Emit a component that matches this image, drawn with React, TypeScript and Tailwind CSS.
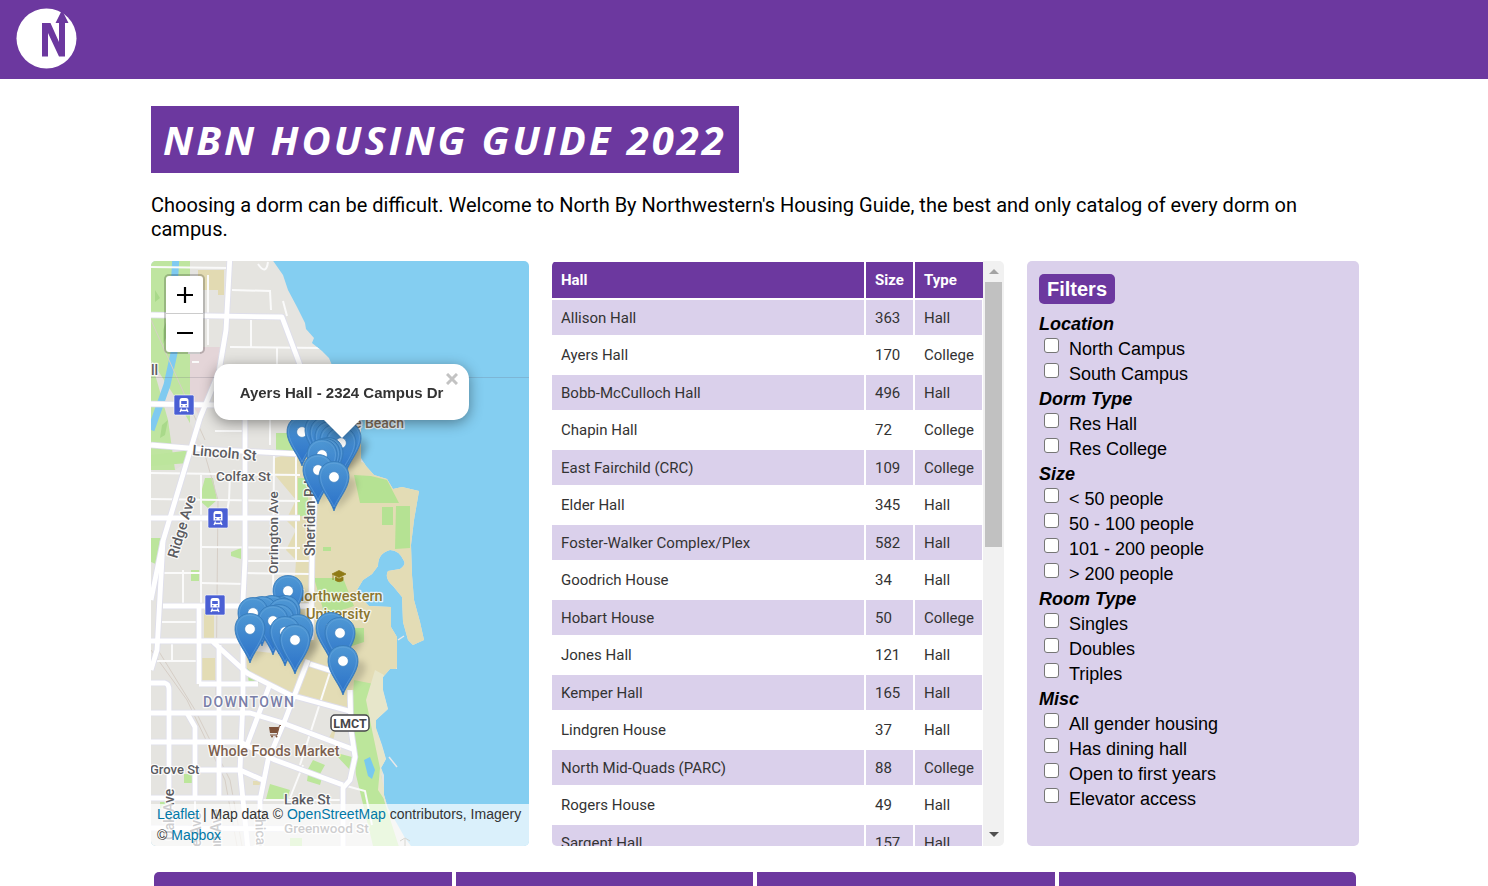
import React from "react";

const halls: [string, number, string][] = [
  ["Allison Hall", 363, "Hall"],
  ["Ayers Hall", 170, "College"],
  ["Bobb-McCulloch Hall", 496, "Hall"],
  ["Chapin Hall", 72, "College"],
  ["East Fairchild (CRC)", 109, "College"],
  ["Elder Hall", 345, "Hall"],
  ["Foster-Walker Complex/Plex", 582, "Hall"],
  ["Goodrich House", 34, "Hall"],
  ["Hobart House", 50, "College"],
  ["Jones Hall", 121, "Hall"],
  ["Kemper Hall", 165, "Hall"],
  ["Lindgren House", 37, "Hall"],
  ["North Mid-Quads (PARC)", 88, "College"],
  ["Rogers House", 49, "Hall"],
  ["Sargent Hall", 157, "Hall"],
];

const filters: { title: string; options: string[] }[] = [
  { title: "Location", options: ["North Campus", "South Campus"] },
  { title: "Dorm Type", options: ["Res Hall", "Res College"] },
  {
    title: "Size",
    options: ["< 50 people", "50 - 100 people", "101 - 200 people", "> 200 people"],
  },
  { title: "Room Type", options: ["Singles", "Doubles", "Triples"] },
  {
    title: "Misc",
    options: ["All gender housing", "Has dining hall", "Open to first years", "Elevator access"],
  },
];

const pins: [number, number][] = [
  [302, 432], [320, 430], [325, 433], [330, 437], [335, 440], [346, 438], [341, 443],
  [328, 453], [325, 454], [322, 455], [318, 470], [334, 477],
  [288, 591], [285, 611], [279, 612], [272, 611], [262, 612], [253, 613], [283, 614],
  [279, 620], [273, 621], [250, 629], [298, 630], [285, 632], [295, 640],
  [331, 628], [340, 633], [343, 661],
];

const majorRoads = [
  "M230 255 L226 330 L219 372 L200 418 L163 541 L151 600",
  "M151 315 L282 317 L300 365 L318 420 L312 560 L311 640",
  "M151 404 L215 405",
  "M245 400 L245 560 L243 600 L243 700 L240 770 L248 850",
  "M151 518 L300 518",
  "M151 445 L200 449 L300 454",
  "M163 606 L310 606",
  "M163 541 L157 650 L151 670",
  "M151 641 H240 M212 641 L247 673 L290 695 L349 711",
  "M199 606 L199 684 M219 645 L219 798",
  "M151 683 H165 Q169 684 169 690 V798",
  "M199 684 H258",
  "M151 713 L250 713 L280 722 L355 750",
  "M187 713 L195 727 V798",
  "M151 742 L240 742 L275 760 L343 785",
  "M200 770 H240 L265 781",
  "M151 798 H262",
  "M308 660 L285 720 L268 760 L260 800 V850",
  "M270 684 L247 745",
  "M310 664 L335 672",
  "M350 690 L351 730 L355 757 L350 780 L343 788 V850",
  "M151 828 L350 829",
];

const minorRoads = [
  "M151 267 L230 268 M258 264 Q266 276 268 262",
  "M232 290 L270 291 L271 310",
  "M208 275 L208 345 M251 320 L251 347 M230 347 L322 348 L327 352",
  "M277 348 L277 365 M283 301 L287 316",
  "M188 353 L200 353 M192 362 L199 362",
  "M215 431 L245 431 M270 405 L270 445",
  "M151 473 L300 475 M151 499 L300 501",
  "M201 475 L201 606 M274 450 L273 606 M230 475 L229 500 L226 518",
  "M201 547 L300 548 M201 583 L245 584 M245 573 L310 574 M245 561 L310 561",
  "M183 570 L183 605 M160 573 L201 573 M162 622 L199 622",
  "M296 455 L296 560 M172 643 V661 M155 661 H199",
  "M330 672 L300 765 M303 765 L290 798",
  "M219 755 V800 M195 798 V850 M262 800 H345",
  "M343 785 L365 791 L372 825",
];

function Pin({ x, y }: { x: number; y: number }) {
  return (
    <g transform={`translate(${x} ${y})`}>
      <path
        d="M0 34 C-3 24 -14.500 12 -15 1 C-15.500 -9 -9 -15.500 0 -15.500 C9 -15.500 15.500 -9 15 1 C14.500 12 3 24 0 34Z"
        fill="url(#pin)"
        stroke="#3579b8"
        strokeWidth="0.8"
      />
      <path
        d="M0 30 C-3 22 -13 11 -13.500 0 C-13.500 -8 -8 -13.800 0 -13.800 C8 -13.800 13.500 -8 13.500 0 C13 11 3 22 0 30Z"
        fill="none"
        stroke="#72aee0"
        strokeOpacity="0.45"
        strokeWidth="1"
      />
      <circle r="5.4" fill="#fff" stroke="#3a7fc0" strokeWidth="0.8" />
    </g>
  );
}

function Station({ x, y }: { x: number; y: number }) {
  return (
    <g transform={`translate(${x} ${y})`}>
      <rect x="-10" y="-10" width="20" height="20" rx="1.5" fill="#4a5fd4" stroke="#fff" strokeOpacity="0.6" />
      <path d="M-4.500 2.500 V-4 Q-4.500 -7 -2 -7 H2 Q4.500 -7 4.500 -4 V2.500Z" fill="#fff" />
      <rect x="-2.8" y="-4" width="5.6" height="3" fill="#4a5fd4" />
      <circle cx="-2.2" cy="0.8" r="0.8" fill="#4a5fd4" />
      <circle cx="2.2" cy="0.8" r="0.8" fill="#4a5fd4" />
      <path d="M-2.500 3.500 L-4 7 M2.500 3.500 L4 7 M-3 5.500 H3" stroke="#fff" strokeWidth="1.3" />
    </g>
  );
}

function MapDrawing() {
  return (
    <svg
      viewBox="151 261 378 585"
      preserveAspectRatio="xMinYMin slice"
      className="block h-full w-full font-['Roboto',sans-serif]"
      role="img"
      aria-label="Campus map"
    >
      <defs>
        <linearGradient id="pin" x1="0" y1="0" x2="0" y2="1">
          <stop offset="0" stopColor="#4f98d4" />
          <stop offset="1" stopColor="#2a70c8" />
        </linearGradient>
        <filter id="soft" x="-50%" y="-50%" width="200%" height="200%">
          <feGaussianBlur stdDeviation="3" />
        </filter>
        <clipPath id="land">
          <path d="M145 255 L269 255 L283 275 L288 290 L297 307 L305 323 L306 329 L314 338 L312 343 L322 351 L329 358 L334 370 L361 420 L361 458 L366 466 L374 475 L387 479 L393 489 L402 487 L419 491 L414 520 L411 545 L412 575 L414 600 L420 622 L424 640 L413 645 L408 640 L403 622 L402 597 L393 586 Q384 578 388 571 L400 569 Q406 565 404 561 Q399 550 390 550 Q378 553 378 566 L372 574 L363 580 L357 590 L362 599 L369 606 L391 607 L391 627 L397 637 L397 669 L390 669 L383 677 L383 690 L388 709 L376 720 L376 728 L382 745 L386 759 L381 768 L384 775 L384 795 L388 808 L396 822 L405 838 L414 850 L145 850Z" />
        </clipPath>
      </defs>
      <rect x="151" y="261" width="378" height="585" fill="#84cef1" />
      <g clipPath="url(#land)">
        <rect x="145" y="255" width="285" height="600" fill="#e5e4e0" />
        <path d="M151 261 H190 V440 L175 470 H151Z" fill="#bfe5a0" />
        <path d="M151 360 L177 400 L205 450 L175 470 L168 420Z" fill="#e3e0dc" />
        <path d="M190 347 H224 L218 374 L200 418 L190 400Z" fill="#e4d5d8" />
        <path d="M198 270 H224 V295 H218 V290 H198Z" fill="#e2dab2" />
        <path d="M176 255 L174 290 L174 353 L167 385 L151 430" fill="none" stroke="#7fcaf0" strokeWidth="7" />
        <path d="M151 455 L192 450 L188 463 L151 466Z M205 478 L213 478 L217 500 L208 508 L199 500Z M151 538 L165 538 L158 555 L163 567 L151 562Z M231 552 L241 548 V559 L231 556Z M191 570 H199 V581 H191Z M276 433 H300 V452 H276Z" fill="#bce59c" />
        <path d="M275 458 L312 446 L361 432 V462 L395 470 L430 485 V660 L398 665 L385 690 L352 712 L345 711 L290 693 L247 672 L246 650 L290 655 L296 560 L286 550 L296 530 L286 520 L296 500 L275 475Z" fill="#e3dcb5" />
        <path d="M298 478 H308 V516 H298Z" fill="#bce59c" />
        <path d="M204 610 H214 V638 H204Z M202 658 H215 V680 H202Z M329 738 L338 718 L333 742Z M253 781 h8 v4 h-8Z" fill="#e3dcb5" />
        <path d="M354 475 L371 476 L387 480 L399 503 L360 503Z M382 507 H393 V525 H382Z M396 506 H410 V548 L395 549Z M314 578 H343 L354 606 L325 616Z M323 547 h8 v4 h-8Z M347 628 h17 v14 l-12 4Z M247 668 l16 14 -14 2Z" fill="#b5e293" />
        <path d="M354 680 L374 684 L377 740 L384 800 L400 850 L374 850 L356 775 L351 720Z" fill="#bce69b" />
        <path d="M375 670 L384 675 L383 690 L388 709 L376 728 L386 759 L381 775 L388 805 L378 790 L380 768 L372 730 L366 700Z" fill="#e7e6ca" />
        <path d="M364 760 l6 -3 5 13 -3 9 -4 -3Z" fill="#78c9ef" />
        <path d="M270 784 L290 790 L287 799 L266 799Z M313 760 l12 5 -5 9 -12 -5Z M308 774 l14 4 -2 7 -13 -4Z M184 774 h9 v9 h-9Z M290 838 h12 v10 h-12Z M160 802 h6 v6 h-6Z M333 752 L352 757 L350 770Z" fill="#bce69b" />
        <path d="M151 650 L187 700 L225 780 L237 846 M158 650 L195 710 L230 780 L242 846 M205 455 L218 500 L216 700 M151 320 L205 440" fill="none" stroke="#d6cec6" strokeWidth="1" />
        {minorRoads.map((d) => (
          <path key={d} d={d} fill="none" stroke="#fafafa" strokeWidth="2" />
        ))}
        {majorRoads.map((d) => (
          <path key={d} d={d} fill="none" stroke="#dedeeb" strokeWidth="6.5" strokeLinejoin="round" />
        ))}
        {majorRoads.map((d) => (
          <path key={d} d={d} fill="none" stroke="#fff" strokeWidth="4.8" strokeLinejoin="round" />
        ))}
        <path d="M163 330 l3 -8 2 12 -5 10Z M162 425 l6 -5 -3 15 -5 3Z M180 325 l4 4 -3 8Z M155 290 l5 8 -5 4Z" fill="#a9d98a" />
      </g>
      <path d="M151 377.500 H529" stroke="#667" strokeOpacity="0.22" />
      <path d="M389 757 L397 767 M398 640 L404 636" stroke="#e8e8ea" strokeWidth="1.500" />

      <g fontWeight="500" fontSize="14" fill="#5c5c61" stroke="#fff" strokeWidth="2.500" strokeOpacity="0.8" paintOrder="stroke" strokeLinejoin="round">
        <text x="151" y="375">ll</text>
        <text transform="translate(192 455) rotate(5)" fontSize="14.500">Lincoln St</text>
        <text x="216" y="481" fontSize="13.500">Colfax St</text>
        <text transform="translate(177 559) rotate(-73)" fontSize="14.500">Ridge Ave</text>
        <text transform="translate(278 574) rotate(-90)" fontSize="13.500">Orrington Ave</text>
        <text transform="translate(315 556) rotate(-90)">Sheridan Rd</text>
        <text x="150" y="774" fontSize="13">Grove St</text>
        <text x="284" y="805">Lake St</text>
        <text x="284" y="833" fontSize="13.500">Greenwood St</text>
        <text transform="translate(174 840) rotate(-90)">Oak Ave</text>
        <text transform="translate(201 878) rotate(-90)">Maple Ave</text>
        <text transform="translate(221 892) rotate(-90)">Sherman Ave</text>
        <text transform="translate(255 810) rotate(88)">Chicago Ave</text>
        <text x="203" y="707" fill="#7a7fa8" letterSpacing="1.400">DOWNTOWN</text>
        <text x="208" y="756" fill="#7d6150" fontSize="14.300">Whole Foods Market</text>
        <text x="354" y="428" fill="#7d6d5c">e Beach</text>
        <text x="294" y="601" fill="#8b7630" fontSize="14.500">Northwestern</text>
        <text x="306" y="619" fill="#8b7630" fontSize="14.500">University</text>
      </g>
      <path d="M332 574 L339 570.500 L346 574 L339 577.500Z M335.500 577 V580.500 Q339 583 343 580.500 V577 L339 579Z M333 575 V580" fill="#8f7a16" stroke="#8f7a16" strokeWidth="0.800" />
      <path d="M269 727 H279 L277.500 733 H270Z" fill="#7d5138" />
      <path d="M281 725.500 H279.500 L277 735 H270" fill="none" stroke="#7d5138" />
      <circle cx="272" cy="736.500" r="1" fill="#7d5138" />
      <circle cx="276.500" cy="736.500" r="1" fill="#7d5138" />
      <rect x="331" y="715" width="38" height="16" rx="4" fill="#fff" stroke="#46464a" strokeWidth="1.500" />
      <text x="350" y="728" textAnchor="middle" fontSize="12.500" fontWeight="700" fill="#46464a">LMCT</text>
      <path d="M400 841 L405 838 L410 841 M405 839 V846" fill="none" stroke="#776" />

      <Station x={184} y={405} />
      <Station x={218} y={518} />
      <Station x={215} y={605} />

      <g filter="url(#soft)" fill="#000" fillOpacity="0.16">
        {pins.map(([x, y]) => (
          <path key={`${x}-${y}`} d={`M${x} ${y + 34} L${x + 6} ${y + 6} Q${x + 18} ${y - 8} ${x + 23} ${y + 6} Q${x + 22} ${y + 18} ${x} ${y + 34}Z`} />
        ))}
      </g>
      {pins.map(([x, y]) => (
        <Pin key={`${x}-${y}`} x={x} y={y} />
      ))}
    </svg>
  );
}

function CampusMap() {
  return (
    <section
      aria-label="Map"
      className="relative overflow-hidden rounded-[5px] font-['Liberation_Sans',sans-serif] text-[#333]"
    >
      <div className="absolute inset-0">
        <MapDrawing />
      </div>
      <div className="absolute left-[13px] top-[13px] flex w-[41px] flex-col overflow-hidden rounded-[5px] border-2 border-black/20 bg-white bg-clip-padding text-black">
        <button aria-label="Zoom in" className="flex h-[38px] items-center justify-center border-b border-[#ccc]">
          <svg viewBox="0 0 16 16" className="size-4">
            <path d="M0 8 H16 M8 0 V16" stroke="currentColor" strokeWidth="2.200" />
          </svg>
        </button>
        <button aria-label="Zoom out" className="flex h-[38px] items-center justify-center">
          <svg viewBox="0 0 16 16" className="size-4">
            <path d="M0 8 H16" stroke="currentColor" strokeWidth="2.200" />
          </svg>
        </button>
      </div>
      <div className="absolute left-[63px] top-[103px] drop-shadow-[0_3px_7px_rgba(0,0,0,0.4)]">
        <div className="flex h-14 w-[255px] items-center justify-center rounded-[15px] bg-white pt-0.5 text-[15px] font-bold">
          Ayers Hall - 2324 Campus Dr
        </div>
        <svg viewBox="0 0 36 18" className="mx-auto block h-[18px] w-9">
          <path d="M0 0 H36 L18 18Z" fill="#fff" />
        </svg>
        <button aria-label="Close popup" className="absolute right-2.5 top-2 flex size-3.5 items-center justify-center text-[#c3c3c3]">
          <svg viewBox="0 0 12 12" className="size-3">
            <path d="M1 1 L11 11 M11 1 L1 11" stroke="currentColor" strokeWidth="3" />
          </svg>
        </button>
      </div>
      <p className="absolute inset-x-0 bottom-0 bg-white/70 px-1.5 text-[14px] leading-[21px]">
        <a href="#leaflet" className="text-[#0078a8]">Leaflet</a> | Map data ©{" "}
        <a href="#osm" className="text-[#0078a8]">OpenStreetMap</a> contributors, Imagery ©{" "}
        <a href="#mapbox" className="text-[#0078a8]">Mapbox</a>
      </p>
    </section>
  );
}

function HallTable() {
  return (
    <section aria-label="Halls" className="flex h-[585px] overflow-hidden rounded-[5px] pt-px">
      <div className="min-w-0 flex-1 overflow-hidden">
        <table className="w-full table-fixed border-separate border-spacing-0 text-left font-['Roboto',sans-serif] text-[15px] leading-5">
          <thead>
            <tr className="h-[38px] text-white">
              <th className="border-b-2 border-r-2 border-white bg-[#6c389f] bg-clip-padding px-[9px] font-bold">Hall</th>
              <th className="w-[49px] border-b-2 border-r-2 border-white bg-[#6c389f] bg-clip-padding px-[9px] font-bold">Size</th>
              <th className="w-[68px] border-b-2 border-white bg-[#6c389f] bg-clip-padding px-[9px] font-bold">Type</th>
            </tr>
          </thead>
          <tbody className="text-[#333]">
            {halls.map(([name, size, type]) => (
              <tr key={name} className="h-[38px] odd:h-[37px] odd:bg-[#dad0eb]">
                <td className="border-b-2 border-r-2 border-white px-[9px]">{name}</td>
                <td className="border-b-2 border-r-2 border-white px-[9px]">{size}</td>
                <td className="border-b-2 border-r border-white px-[9px]">{type}</td>
              </tr>
            ))}
          </tbody>
        </table>
      </div>
      <div className="-mt-px flex w-[21px] flex-col items-center bg-[#f1f1f1]" aria-hidden="true">
        <div className="flex h-[21px] items-center">
          <svg viewBox="0 0 10 5" className="h-[5px] w-2.5"><path d="M0 5 L5 0 L10 5Z" fill="#a3a3a3" /></svg>
        </div>
        <div className="h-[265px] w-[17px] bg-[#c1c1c1]" />
        <div className="mt-auto flex h-[23px] items-center">
          <svg viewBox="0 0 10 5" className="h-[5px] w-2.5"><path d="M0 0 L5 5 L10 0Z" fill="#505050" /></svg>
        </div>
      </div>
    </section>
  );
}

function Filters() {
  return (
    <form className="rounded-[5px] bg-[#dad0eb] px-3 pt-[13px] font-['Liberation_Sans',sans-serif] text-[18px] leading-[25px] text-black">
      <h2 className="mb-2 w-fit rounded-[5px] bg-[#6c389f] px-2 text-[20px] font-bold leading-[30px] text-white">
        Filters
      </h2>
      {filters.map(({ title, options }) => (
        <fieldset key={title}>
          <legend className="font-bold italic">{title}</legend>
          {options.map((option) => (
            <label key={option} className="flex h-[25px] items-start">
              <input
                type="checkbox"
                className="ml-[5px] mr-2.5 mt-px size-[15px] shrink-0 appearance-none rounded-[3px] border border-[#767676] bg-white checked:bg-[#6c389f]"
              />
              {option}
            </label>
          ))}
        </fieldset>
      ))}
    </form>
  );
}

export default function App() {
  return (
    <div className="bg-white">
      <header className="h-[79px] bg-[#6c389f] px-4 pt-2">
        <a href="#home" aria-label="North by Northwestern" className="block w-fit">
          <svg viewBox="0 0 61 61" className="size-[61px]">
            <circle cx="30.500" cy="30.500" r="30" fill="#fff" />
            <path
              d="M26 15 H34.500 L43 34 V15 H39.500 L45 4 L46 2 L52.500 15 H49 V48.500 H43 L32 25 V48.500 H26Z"
              fill="#6c389f"
            />
          </svg>
        </a>
      </header>
      <main className="pl-[151px] pr-[129px] pt-[27px]">
        <h1 className="w-fit bg-[#6c389f] px-3 font-['Open_Sans',sans-serif] text-[40px] font-bold italic leading-[67px] tracking-[3px] text-white">
          NBN HOUSING GUIDE 2022
        </h1>
        <p className="mt-5 font-['Roboto',sans-serif] text-[20px] leading-6 text-black">
          Choosing a dorm can be difficult. Welcome to North By Northwestern's Housing Guide, the best and only
          catalog of every dorm on campus.
        </p>
        <div className="mt-5 grid grid-cols-[378fr_452fr_332fr] gap-[23px]">
          <CampusMap />
          <HallTable />
          <Filters />
        </div>
        <div className="mt-[26px] grid grid-cols-4 gap-1 overflow-hidden px-[3px]">
          <div className="h-3.5 rounded-tl-[5px] bg-[#6c389f]" />
          <div className="h-3.5 bg-[#6c389f]" />
          <div className="h-3.5 bg-[#6c389f]" />
          <div className="h-3.5 rounded-tr-[5px] bg-[#6c389f]" />
        </div>
      </main>
    </div>
  );
}
